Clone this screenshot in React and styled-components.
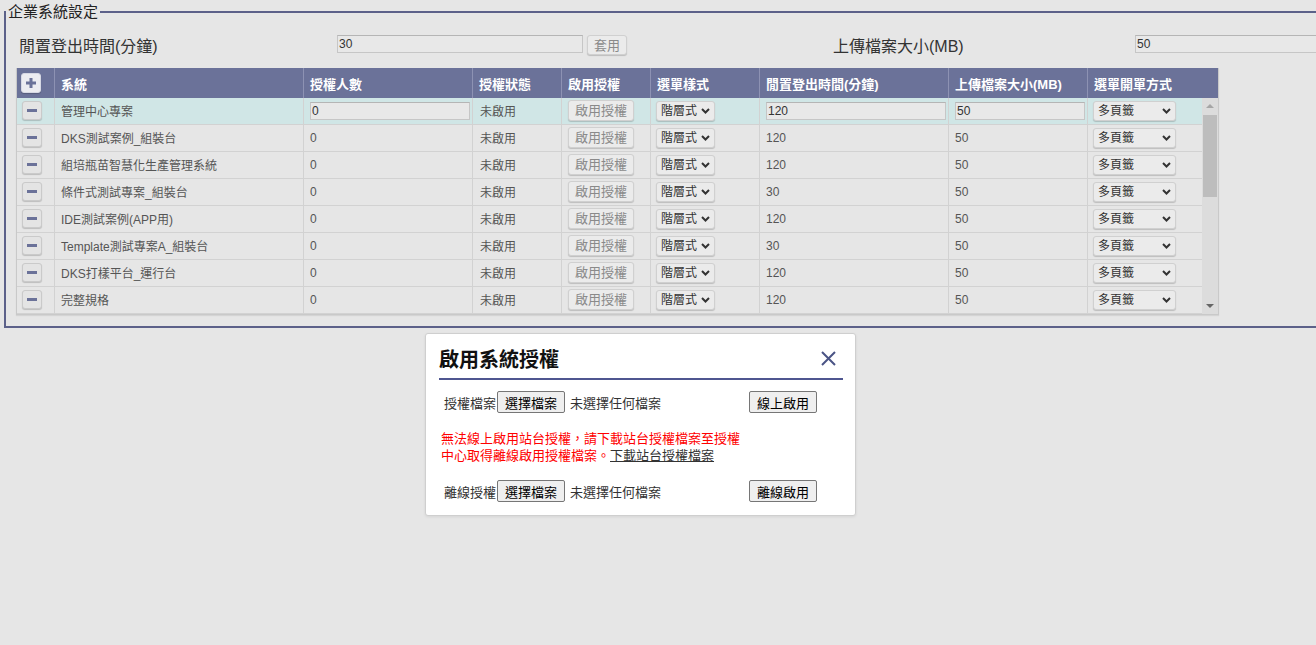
import React from "react";
import styled, { createGlobalStyle } from "styled-components";

const GlobalStyle = createGlobalStyle`
  html, body {
    margin: 0;
    padding: 0;
    background: #e6e6e6;
    overflow: hidden;
  }
  body {
    font-family: "Liberation Sans", "Noto Sans CJK TC", sans-serif;
    color: #333;
  }
  * { box-sizing: border-box; }
`;

const Page = styled.div`
  position: relative;
  width: 1316px;
  height: 645px;
`;

const Fieldset = styled.fieldset`
  margin: 2px 0 0 4px;
  padding: 0 0 11px 0;
  width: 1360px;
  border: 2px solid #5c6189;
  min-width: 0;
`;

const Legend = styled.legend`
  padding: 0 2px;
  margin-left: 0;
  font-size: 15px;
  line-height: 20px;
  color: #222;
`;

const Content = styled.div`
  padding: 9px 0 0 10px;
`;

const SettingsRow = styled.div`
  display: grid;
  grid-template-columns: 321px 496px 302px 1fr;
  align-items: center;
  height: 26px;
  margin-bottom: 11px;
`;

const SettingLabel = styled.div`
  font-size: 16px;
  padding-left: ${(p) => p.$pad ?? 3}px;
  color: #333;
  padding-top: 1px;
`;

const FieldGroup = styled.div`
  display: flex;
  align-items: center;
  gap: 4px;
`;

const TextInput = styled.input`
  width: ${(p) => p.$w}px;
  height: 18px;
  border: 1px solid #c6c6c6;
  border-top-color: #b5b5b5;
  background: #e8e8e8;
  font-family: inherit;
  font-size: 12px;
  color: #333;
  padding: 0 1px;
  margin: 0;
  outline: none;
`;

const SmallButton = styled.button`
  height: ${(p) => p.$h || 21}px;
  padding: 0 ${(p) => p.$px || 6}px;
  border: 1px solid #d0d0d0;
  border-radius: 3px;
  background: #ebebeb;
  box-shadow: 0 1px 1px rgba(0, 0, 0, 0.18);
  color: #8a8a8a;
  font-family: inherit;
  font-size: 13px;
  line-height: 1;
  cursor: pointer;
  margin-top: ${(p) => p.$mt || 0}px;
`;

const TableBox = styled.div`
  width: 1203px;
  border: 1px solid #c9c9c9;
  border-top: none;
  box-shadow: 0 1px 1px rgba(0, 0, 0, 0.08);
`;

const columns = "38px 249px 169px 89px 89px 109px 189px 139px 1fr";

const HeaderRow = styled.div`
  display: grid;
  grid-template-columns: ${columns};
  height: 30px;
  background: #6b7299;
`;

const HeaderCell = styled.div`
  display: flex;
  align-items: center;
  padding-left: ${(p) => p.$pad ?? 6}px;
  color: #fff;
  font-weight: bold;
  font-size: 13px;
  border-right: 1px solid #8d92b3;
  &:last-child { border-right: none; }
`;

const Body = styled.div`
  display: flex;
  height: 216px;
  overflow: hidden;
`;

const RowList = styled.div`
  flex: 1;
  min-width: 0;
`;

const Row = styled.div`
  display: grid;
  grid-template-columns: ${columns};
  height: 27px;
  background: ${(p) => (p.$active ? "#d0e6e6" : "#e6e6e6")};
  border-bottom: 1px solid #d2d2d2;
`;

const Cell = styled.div`
  display: flex;
  align-items: center;
  padding-left: ${(p) => p.$pad ?? 6}px;
  padding-bottom: 1px;
  font-size: 12px;
  color: #555;
  border-right: 1px solid #d2d2d2;
  white-space: nowrap;
  overflow: hidden;
  &:last-child { border-right: none; }
`;

const ScrollRail = styled.div`
  width: 16px;
  display: flex;
  flex-direction: column;
  background: #dcdcdc;
`;

const ScrollArrow = styled.div`
  height: 16px;
  display: flex;
  align-items: center;
  justify-content: center;
`;

const ScrollThumb = styled.div`
  height: 82px;
  margin: 1px 1px 0 1px;
  background: #bdbdbd;
`;

const ScrollSpacer = styled.div`
  flex: 1;
`;

const IconButton = styled.button`
  width: 20px;
  height: ${(p) => (p.$plus ? 20 : 19)}px;
  padding: 0;
  display: flex;
  align-items: center;
  justify-content: center;
  border: 1px solid ${(p) => (p.$plus ? "#d6d8e4" : "#cacaca")};
  border-radius: 3px;
  background: ${(p) => (p.$plus ? "#ececf1" : "#e4e4e4")};
  box-shadow: 0 1px 1px rgba(0, 0, 0, 0.18);
  cursor: pointer;
`;

const SelectWrap = styled.span`
  position: relative;
  display: inline-flex;
  width: ${(p) => p.$w}px;
  height: 20px;
`;

const Select = styled.select`
  appearance: none;
  -webkit-appearance: none;
  width: 100%;
  height: 100%;
  margin: 0;
  padding: 0 0 0 4px;
  border: 1px solid #d0d0d0;
  border-radius: 3px;
  background: #ebebeb;
  box-shadow: 0 1px 1px rgba(0, 0, 0, 0.18);
  font-family: inherit;
  font-size: 12px;
  color: #333;
  outline: none;
`;

const Chevron = styled.svg`
  position: absolute;
  right: 5px;
  top: 7px;
  pointer-events: none;
`;

const Dialog = styled.div`
  position: absolute;
  left: 425px;
  top: 331px;
  width: 431px;
  height: 183px;
  background: #fff;
  border: 1px solid #cfcfcf;
  border-radius: 3px;
  box-shadow: 0 1px 3px rgba(0, 0, 0, 0.08);
  padding: 12px 12px 0 13px;
  font-family: "Noto Sans CJK TC", "Liberation Sans", sans-serif;
`;

const DialogHeader = styled.div`
  display: flex;
  justify-content: space-between;
  align-items: flex-start;
  height: 34px;
  border-bottom: 2px solid #4f5690;
`;

const DialogTitle = styled.h2`
  margin: 0;
  font-size: 20px;
  font-weight: bold;
  color: #111;
  line-height: 26px;
`;

const CloseButton = styled.button`
  border: none;
  background: none;
  padding: 0;
  margin: 4px 6px 0 0;
  width: 17px;
  height: 17px;
  cursor: pointer;
  display: flex;
`;

const FormRow = styled.div`
  display: grid;
  grid-template-columns: 53px 68px 184px 68px;
  align-items: center;
  padding-left: 5px;
  margin-top: ${(p) => p.$mt}px;
  font-size: 13px;
  color: #333;
`;

const FileButton = styled.button`
  height: 22px;
  width: 68px;
  padding: 0;
  border: 1px solid #767676;
  border-radius: 2px;
  background: #efefef;
  font-family: inherit;
  font-size: 13px;
  color: #000;
  cursor: pointer;
`;

const NoFile = styled.span`
  padding-left: 5px;
`;

const Warning = styled.p`
  margin: 16px 0 0 2px;
  width: 305px;
  color: #ff0000;
  font-size: 13px;
  line-height: 17px;
`;

const Link = styled.a`
  color: #333;
  text-decoration: underline;
`;

const Plus = () => (
  <svg width="10" height="10" viewBox="0 0 10 10">
    <rect x="3.5" y="0" width="3" height="10" fill="#6b7299" />
    <rect x="0" y="3.5" width="10" height="3" fill="#6b7299" />
  </svg>
);

const Minus = () => (
  <svg width="10" height="3" viewBox="0 0 10 3">
    <rect x="0" y="0" width="10" height="3" fill="#6b7299" />
  </svg>
);

const ChevronIcon = () => (
  <Chevron width="9" height="6" viewBox="0 0 9 6">
    <path d="M1 1 L4.5 4.5 L8 1" stroke="#333" strokeWidth="2" fill="none" />
  </Chevron>
);

const rows = [
  { name: "管理中心專案", idle: "120", size: "50", active: true },
  { name: "DKS測試案例_組裝台", idle: "120", size: "50" },
  { name: "組培瓶苗智慧化生產管理系統", idle: "120", size: "50" },
  { name: "條件式測試專案_組裝台", idle: "30", size: "50" },
  { name: "IDE測試案例(APP用)", idle: "120", size: "50" },
  { name: "Template測試專案A_組裝台", idle: "30", size: "50" },
  { name: "DKS打樣平台_運行台", idle: "120", size: "50" },
  { name: "完整規格", idle: "120", size: "50" },
];

const headers = [
  "系統",
  "授權人數",
  "授權狀態",
  "啟用授權",
  "選單樣式",
  "閒置登出時間(分鐘)",
  "上傳檔案大小(MB)",
  "選單開單方式",
];

export default function App() {
  return (
    <>
      <GlobalStyle />
      <Page>
        <Fieldset>
          <Legend>企業系統設定</Legend>
          <Content>
            <SettingsRow>
              <SettingLabel>閒置登出時間(分鐘)</SettingLabel>
              <FieldGroup>
                <TextInput $w={246} defaultValue="30" />
                <SmallButton $h={20} $px={6} $mt={2}>套用</SmallButton>
              </FieldGroup>
              <SettingLabel $pad={0}>上傳檔案大小(MB)</SettingLabel>
              <FieldGroup>
                <TextInput $w={246} defaultValue="50" />
              </FieldGroup>
            </SettingsRow>

            <TableBox>
              <HeaderRow>
                <HeaderCell $pad={4}>
                  <IconButton $plus aria-label="新增">
                    <Plus />
                  </IconButton>
                </HeaderCell>
                {headers.map((h) => (
                  <HeaderCell key={h}>{h}</HeaderCell>
                ))}
              </HeaderRow>
              <Body>
                <RowList>
                  {rows.map((r, i) => (
                    <Row key={i} $active={r.active}>
                      <Cell $pad={5}>
                        <IconButton aria-label="刪除">
                          <Minus />
                        </IconButton>
                      </Cell>
                      <Cell>{r.name}</Cell>
                      <Cell>
                        {r.active ? <TextInput $w={160} defaultValue="0" /> : "0"}
                      </Cell>
                      <Cell $pad={7}>未啟用</Cell>
                      <Cell $pad={6}>
                        <SmallButton>啟用授權</SmallButton>
                      </Cell>
                      <Cell $pad={5}>
                        <SelectWrap $w={59}>
                          <Select defaultValue="階層式">
                            <option>階層式</option>
                          </Select>
                          <ChevronIcon />
                        </SelectWrap>
                      </Cell>
                      <Cell>
                        {r.active ? (
                          <TextInput $w={180} defaultValue={r.idle} />
                        ) : (
                          r.idle
                        )}
                      </Cell>
                      <Cell>
                        {r.active ? (
                          <TextInput $w={130} defaultValue={r.size} />
                        ) : (
                          r.size
                        )}
                      </Cell>
                      <Cell $pad={5}>
                        <SelectWrap $w={83}>
                          <Select defaultValue="多頁籤">
                            <option>多頁籤</option>
                          </Select>
                          <ChevronIcon />
                        </SelectWrap>
                      </Cell>
                    </Row>
                  ))}
                </RowList>
                <ScrollRail aria-hidden="true">
                  <ScrollArrow>
                    <svg width="8" height="4" viewBox="0 0 8 4">
                      <path d="M0 4 L4 0 L8 4 Z" fill="#a6a6a6" />
                    </svg>
                  </ScrollArrow>
                  <ScrollThumb />
                  <ScrollSpacer />
                  <ScrollArrow>
                    <svg width="8" height="4" viewBox="0 0 8 4">
                      <path d="M0 0 L8 0 L4 4 Z" fill="#666" />
                    </svg>
                  </ScrollArrow>
                </ScrollRail>
              </Body>
            </TableBox>
          </Content>
        </Fieldset>

        <Dialog role="dialog">
          <DialogHeader>
            <DialogTitle>啟用系統授權</DialogTitle>
            <CloseButton aria-label="關閉">
              <svg width="17" height="17" viewBox="0 0 17 17">
                <path
                  d="M2 2 L15 15 M15 2 L2 15"
                  stroke="#4a5485"
                  strokeWidth="2"
                  fill="none"
                />
              </svg>
            </CloseButton>
          </DialogHeader>
          <FormRow $mt={11}>
            <span>授權檔案</span>
            <FileButton>選擇檔案</FileButton>
            <NoFile>未選擇任何檔案</NoFile>
            <FileButton>線上啟用</FileButton>
          </FormRow>
          <Warning>
            無法線上啟用站台授權，請下載站台授權檔案至授權中心取得離線啟用授權檔案。
            <Link href="#">下載站台授權檔案</Link>
          </Warning>
          <FormRow $mt={17}>
            <span>離線授權</span>
            <FileButton>選擇檔案</FileButton>
            <NoFile>未選擇任何檔案</NoFile>
            <FileButton>離線啟用</FileButton>
          </FormRow>
        </Dialog>
      </Page>
    </>
  );
}
